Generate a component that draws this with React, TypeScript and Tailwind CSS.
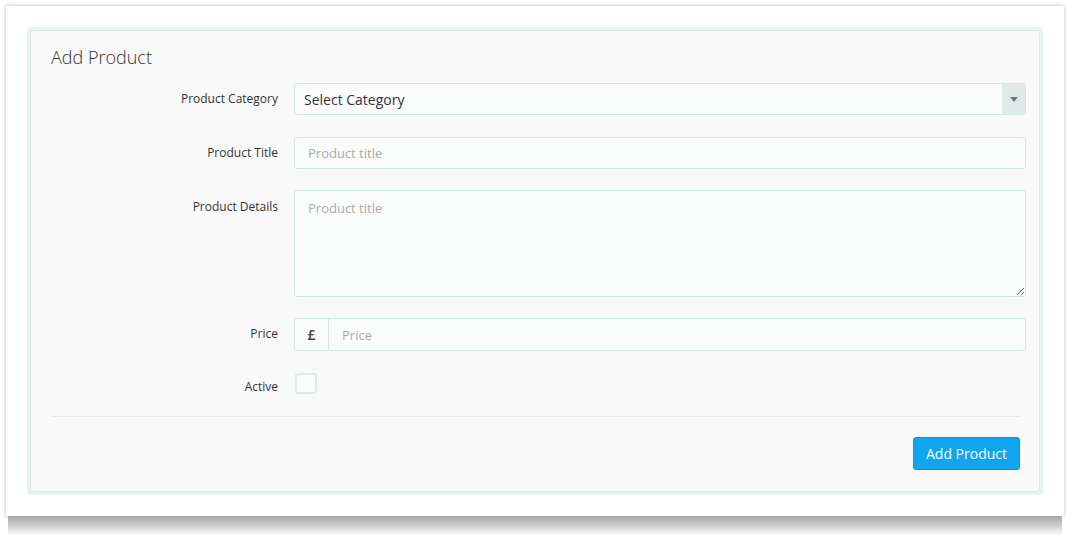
import React from "react";

const labelCls =
  "w-[227px] shrink-0 text-right text-[12px] leading-[20px] text-[#333] pr-0";

function Row({ label, children, className = "", labelPad = "pt-[6px]" }: { label: string; children: React.ReactNode; className?: string; labelPad?: string }) {
  return (
    <div className={`flex items-start gap-[16px] ${className}`}>
      <div className={`${labelCls} ${labelPad}`}>{label}</div>
      <div className="flex-1">{children}</div>
    </div>
  );
}

export default function App() {
  return (
    <div
      className="min-h-[544px] bg-white pt-[6px] px-[6px] text-[#333]"
      style={{ fontFamily: '"Open Sans", "Liberation Sans", sans-serif' }}
    >
      <div className="w-[1058px]">
        <div className="bg-white px-[21px] pt-[21px] pb-[21px] shadow-[0_0_4px_rgba(0,0,0,0.28)]">
          <div className="p-[3px] bg-[#eaf3f3] rounded-[3px]">
            <div className="border border-[#d9e6e6] bg-[#f9f9f9] rounded-[3px] pl-[20px] pr-[13px] pt-[14px] pb-[21px]">
              <h2 className="text-[18px] leading-[24px] font-light text-[#333]">Add Product</h2>

              <div className="mt-[14px] flex flex-col">
                <Row label="Product Category">
                  <div className="flex h-[32px] border border-[#d3e4e2] rounded-[3px] bg-[#fafbfb] overflow-hidden">
                    <div className="flex-1 pl-[9px] flex items-center text-[14px] text-[#333]">Select Category</div>
                    <div className="w-[23px] bg-[#e0ebe9] flex items-center justify-center">
                      <svg width="8" height="5" viewBox="0 0 8 5">
                        <path d="M0 0 L8 0 L4 5 Z" fill="#777" />
                      </svg>
                    </div>
                  </div>
                </Row>

                <Row label="Product Title" className="mt-[22px]">
                  <input
                    placeholder="Product title"
                    className="w-full h-[32px] border border-[#d3e4e2] rounded-[3px] bg-[#fafbfb] px-[13px] text-[13px] placeholder:text-[#aaa] outline-none"
                  />
                </Row>

                <Row label="Product Details" className="mt-[21px]" labelPad="pt-[7px]">
                  <textarea
                    placeholder="Product title"
                    className="block w-full h-[107px] border border-[#d3e4e2] rounded-[3px] bg-[#fafbfb] px-[13px] pt-[7px] text-[13px] leading-[20px] placeholder:text-[#aaa] outline-none"
                  />
                </Row>

                <Row label="Price" className="mt-[21px]">
                  <div className="flex h-[33px] border border-[#d3e4e2] rounded-[3px] bg-[#fafbfb]">
                    <div className="w-[34px] border-r border-[#d3e4e2] flex items-center justify-center text-[14px] font-semibold text-[#444]">
                      £
                    </div>
                    <input
                      placeholder="Price"
                      className="flex-1 h-full bg-transparent px-[13px] text-[13px] placeholder:text-[#aaa] outline-none"
                    />
                  </div>
                </Row>

                <div className="mt-[22px] flex items-start gap-[16px] h-[21px]">
                  <div className="w-[227px] shrink-0 text-right text-[12px] leading-[20px] pt-[4px]">Active</div>
                  <div className="ml-[1px] w-[22px] h-[21px] border-2 border-[#dde9e8] rounded-[3px] bg-[#fafbfb]" />
                </div>

                <div className="mt-[22px] mr-[6px] border-t border-[#e2ecec]" />

                <div className="mt-[20px] mr-[6px] flex justify-end">
                  <button className="w-[107px] h-[33px] rounded-[3px] bg-[#10a5ef] border border-[#0b94da] text-white text-[14px]">
                    Add Product
                  </button>
                </div>
              </div>
            </div>
          </div>
        </div>
        <div className="h-[20px] mx-[2px] bg-gradient-to-b from-[#a6a6a6] via-[#d0d0d0] to-white" />
      </div>
    </div>
  );
}
